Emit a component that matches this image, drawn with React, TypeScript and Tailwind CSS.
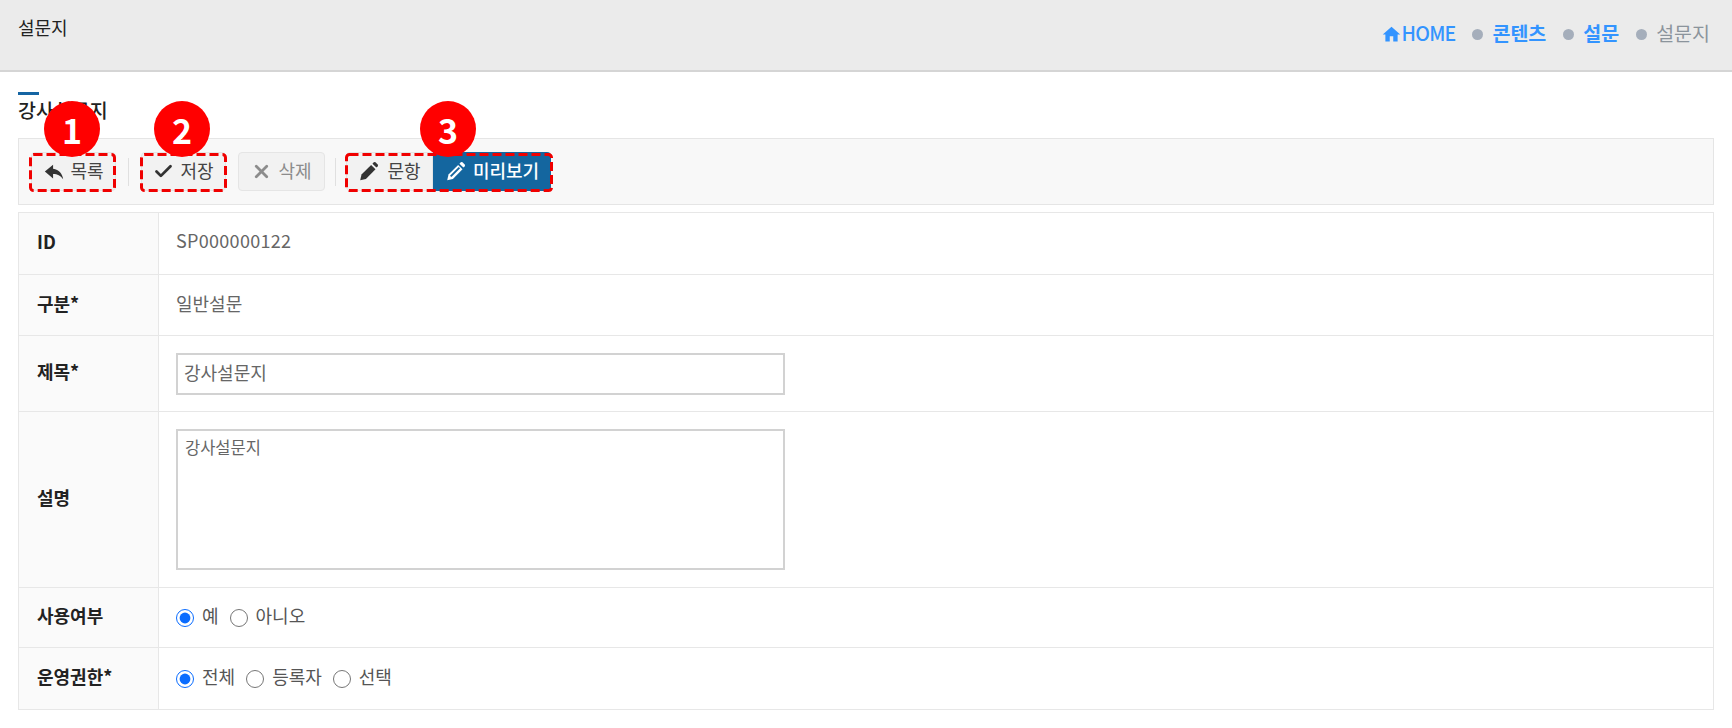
import { Check, X } from 'lucide-react'
import { MdHome } from 'react-icons/md'

const font = 'font-["Noto_Sans_CJK_KR","Noto_Sans",sans-serif]'

function ReplyIcon() {
    return (
        <svg viewBox="0 0 24 24" className="mt-[2px] h-[22px] w-[22px] text-[#333]" fill="currentColor">
            <path d="M11 4 2 11.5l9 7.5v-4.8c4.8 0 8 1.5 11 5.8-.8-6-4.500-10.800-11-11.500z" />
        </svg>
    )
}

function PencilIcon({ inner }: { inner?: string }) {
    return (
        <svg viewBox="0 0 24 24" className="mt-[2px] h-[21px] w-[21px]" fill="currentColor">
            <path d="M2.500 22l1.500-6.500L15 4.500l5 5L9 20.500z" />
            <path d="M16.500 3l1.500-1.500a1.500 1.500 0 0 1 2 0l2.500 2.500a1.500 1.500 0 0 1 0 2L21 7.500z" />
            {inner && <path d="M6.500 17.500 16.500 7.500" stroke={inner} strokeWidth="2.200" />}
        </svg>
    )
}

function Crumb({ label, current }: { label: string; current?: boolean }) {
    return (
        <>
            <span className="ml-[17px] mr-[9px] mt-[3px] h-[11px] w-[11px] rounded-full bg-[#a5aebb]" />
            <span className={current ? 'text-[#8b949c]' : 'font-bold text-[#3394ff]'}>{label}</span>
        </>
    )
}

function Radio({ label, checked }: { label: string; checked?: boolean }) {
    return (
        <label className="flex items-center">
            <input type="radio" name="group" defaultChecked={checked} className="m-0 h-[18px] w-[18px] accent-[#0a6cff]" />
            <span className="ml-[8px] -translate-y-[2px]">{label}</span>
        </label>
    )
}

function Row({ label, height, children }: { label: string; height: string; children: React.ReactNode }) {
    return (
        <tr className={height}>
            <th className="w-[140px] border border-[#e7e7e7] bg-[#fafafa] pb-[4px] pl-[18px] text-left font-bold text-[#222]">{label}</th>
            <td className="border border-[#e7e7e7] pl-[17px] text-[#666]">{children}</td>
        </tr>
    )
}

// dashed callout frame, drawn so the dash length can follow the picture
function Frame({ className, w }: { className: string; w: number }) {
    return (
        <svg className={`absolute top-[153px] h-[39px] ${className}`} width={w} height={39} fill="none">
            <rect x="1.500" y="1.500" width={w - 3} height="36" rx="3" stroke="#f00000" strokeWidth="3" strokeDasharray="9 4" />
        </svg>
    )
}

export default function App() {
    return (
        <div className={`relative h-[728px] w-[1732px] overflow-hidden bg-white text-[18px] ${font}`}>
            {/* Page header */}
            <div className="flex h-[72px] justify-between border-b-2 border-[#d5d5d5] bg-[#ebebeb] pl-[18px] pr-[22px]">
                <div className="pt-[13px] text-[18px] leading-[28px] text-[#222]">설문지</div>
                <div className="flex h-[66px] items-center text-[19.5px]">
                    <MdHome className="mt-[3px] text-[21px] text-[#3394ff]" />
                    <span className="font-medium tracking-[-0.8px] text-[#3394ff]">HOME</span>
                    <Crumb label="콘텐츠" />
                    <Crumb label="설문" />
                    <Crumb label="설문지" current />
                </div>
            </div>

            <div className="px-[18px]">
                {/* Title */}
                <div className="mt-[20px] h-[3px] w-[21px] bg-[#1565a3]" />
                <h2 className="mt-[1px] h-[42px] text-[19.500px] font-medium leading-[28px] text-[#222]">강사설문지</h2>

                {/* Toolbar */}
                <div className="flex h-[67px] items-center border border-[#e5e5e5] bg-[#f8f8f8] pl-[12px]">
                    <button className="flex h-[39px] w-[85px] items-center justify-center gap-[5px] rounded border border-[#e5e5e5] bg-[#f2f2f2] pb-[2px] text-[#444]">
                        <ReplyIcon />목록
                    </button>
                    <div className="mx-[12px] h-[28px] w-px bg-[#e0e0e0]" />
                    <button className="flex h-[39px] w-[85px] items-center justify-center gap-[6px] rounded border border-[#e5e5e5] bg-[#f2f2f2] pb-[2px] text-[#444]">
                        <Check size={21} strokeWidth={3.2} className="mt-[2px] text-[#333]" />저장
                    </button>
                    <button className="ml-[12px] flex h-[39px] w-[87px] items-center justify-center gap-[6px] rounded border border-[#e5e5e5] bg-[#f2f2f2] pb-[2px] text-[#8c8c8c]">
                        <X size={21} strokeWidth={3.2} className="mt-[2px] text-[#8c8c8c]" />삭제
                    </button>
                    <div className="mx-[10px] h-[28px] w-px bg-[#e0e0e0]" />
                    <div className="flex">
                        <button className="flex h-[39px] w-[87px] items-center justify-center gap-[8px] rounded-l border border-[#e5e5e5] bg-[#f2f2f2] pb-[2px] text-[#444]">
                            <span className="text-[#333]"><PencilIcon /></span>문항
                        </button>
                        <button className="flex h-[39px] w-[118px] items-center justify-center gap-[7px] rounded-r bg-[#14669f] pb-[2px] font-medium text-white">
                            <span className="text-white"><PencilIcon inner="#14669f" /></span>미리보기
                        </button>
                    </div>
                </div>

                {/* Form */}
                <table className="mt-[7px] w-full border-collapse">
                    <tbody>
                        <Row label="ID" height="h-[62px]">
                            <span className="relative -top-[3px] tracking-[0.3px]">SP000000122</span>
                        </Row>
                        <Row label="구분*" height="h-[61px]">
                            <span className="relative -top-[2px]">일반설문</span>
                        </Row>
                        <Row label="제목*" height="h-[76px]">
                            <input
                                readOnly
                                value="강사설문지"
                                className="block h-[42px] w-[609px] border-2 border-[#d2d2d2] px-[6px] pb-[3px] text-[#666] outline-none"
                            />
                        </Row>
                        <Row label="설명" height="h-[176px]">
                            <textarea
                                readOnly
                                value="강사설문지"
                                className="block h-[141px] w-[609px] resize-none border-2 border-[#d2d2d2] px-[7px] pt-[4px] text-[16.5px] text-[#666] outline-none"
                            />
                        </Row>
                        <Row label="사용여부" height="h-[60px]">
                            <form className="flex gap-[11px] text-[#555]">
                                <Radio label="예" checked />
                                <Radio label="아니오" />
                            </form>
                        </Row>
                        <Row label="운영권한*" height="h-[62px]">
                            <form className="flex gap-[11px] text-[#555]">
                                <Radio label="전체" checked />
                                <Radio label="등록자" />
                                <Radio label="선택" />
                            </form>
                        </Row>
                    </tbody>
                </table>
            </div>

            {/* Callout boxes */}
            <Frame className="left-[29px]" w={87} />
            <Frame className="left-[140px]" w={87} />
            <Frame className="left-[345px]" w={208} />

            {/* Callout numbers */}
            <div className="absolute left-[44px] top-[101px] flex h-[56px] w-[56px] items-center justify-center rounded-full bg-[#ff0000] text-[34px] font-bold text-white">1</div>
            <div className="absolute left-[154px] top-[101px] flex h-[56px] w-[56px] items-center justify-center rounded-full bg-[#ff0000] text-[34px] font-bold text-white">2</div>
            <div className="absolute left-[420px] top-[101px] flex h-[56px] w-[56px] items-center justify-center rounded-full bg-[#ff0000] text-[34px] font-bold text-white">3</div>
        </div>
    )
}
